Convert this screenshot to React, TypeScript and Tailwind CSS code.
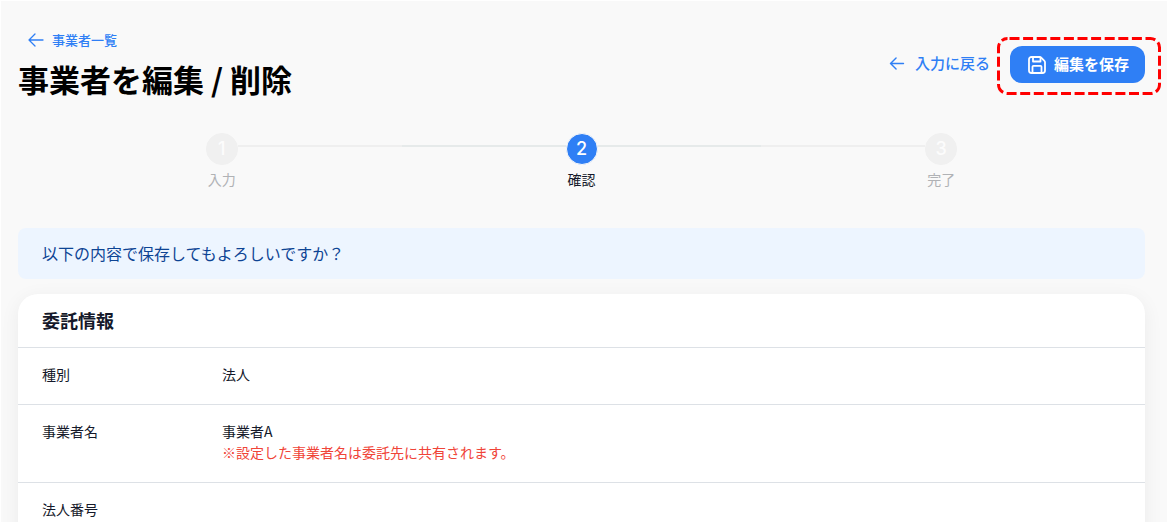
import clsx from "clsx";

const steps = [
  { number: 1, label: "入力" },
  { number: 2, label: "確認" },
  { number: 3, label: "完了" },
];

const rows = [
  { label: "種別", value: "法人" },
  {
    label: "事業者名",
    value: "事業者A",
    note: "※設定した事業者名は委託先に共有されます。",
  },
  { label: "法人番号", value: "" },
];

const CURRENT_STEP = 2;

function ArrowLeftIcon({ className }: { className?: string }) {
  return (
    <svg
      viewBox="0 0 16 14"
      className={className}
      fill="none"
      stroke="currentColor"
      strokeLinecap="round"
      strokeLinejoin="round"
      aria-hidden="true"
    >
      <path d="M7 1 1 7l6 6M1 7h14" />
    </svg>
  );
}

function SaveIcon() {
  return (
    <svg
      viewBox="0 0 18 18"
      className="size-[18px] shrink-0"
      fill="none"
      stroke="currentColor"
      strokeWidth="1.8"
      strokeLinejoin="round"
      aria-hidden="true"
    >
      <path d="M3.5 1h8.3a2 2 0 0 1 1.4.6l3.2 3.2a2 2 0 0 1 .6 1.4v8.3a2.5 2.5 0 0 1-2.5 2.5h-11A2.5 2.5 0 0 1 1 14.5v-11A2.5 2.5 0 0 1 3.500 1z" />
      <path d="M5 1.2v4.300h7.500V1.800M4.500 16.800V10.800a1 1 0 0 1 1-1h7a1 1 0 0 1 1 1v6" />
    </svg>
  );
}

function PageHeader() {
  return (
    <header className="flex justify-between">
      <div>
        <a
          href="#list"
          className="ml-2.5 flex h-5 items-center gap-2 text-[13px] font-medium text-[#2f7ff5]"
        >
          <ArrowLeftIcon className="h-3.5 w-4 stroke-[1.3]" />
          事業者一覧
        </a>
        <h1 className="mt-1.5 text-[31px] leading-[45px] font-bold text-black">
          事業者を編集 / 削除
        </h1>
      </div>

      <div className="flex items-start gap-2 pt-2">
        <a
          href="#input"
          className="flex h-[50px] items-center gap-2.5 text-[15px] font-medium text-[#2f7ff5]"
        >
          <ArrowLeftIcon className="h-[13px] w-4 stroke-[1.5]" />
          入力に戻る
        </a>
        {/* Highlight around the save action */}
        <div className="relative -mr-3.5 pt-2 pr-3.5 pb-2.5 pl-3">
          <svg
            className="absolute inset-0 size-full overflow-visible"
            fill="none"
            aria-hidden="true"
          >
            <rect
              x="0.5"
              y="0.5"
              width="100%"
              height="100%"
              rx="9"
              stroke="#ff0000"
              strokeWidth="3"
              strokeDasharray="10 3.6"
              strokeDashoffset="-2"
            />
          </svg>
          <button
            type="button"
            className="relative flex h-[37px] w-[135px] items-center gap-2 rounded-xl bg-[#2f7ff5] pl-[18px] text-[15px] font-bold whitespace-nowrap text-white"
          >
            <SaveIcon />
            編集を保存
          </button>
        </div>
      </div>
    </header>
  );
}

function Stepper() {
  return (
    <ol className="mx-6 mt-8 grid grid-cols-3">
      {steps.map((step, i) => {
        const active = step.number === CURRENT_STEP;
        return (
          <li
            key={step.number}
            className="flex flex-col items-center"
            aria-current={active ? "step" : undefined}
          >
            <div className="flex h-8 w-full">
              <span
                className={clsx(
                  "mt-3 h-0.5 flex-1",
                  i > 0 && (active ? "bg-[#e6eaea]" : "bg-[#efefef]")
                )}
              />
              <span
                className={clsx(
                  "flex size-8 items-center justify-center rounded-full border font-[Inter] text-lg font-medium",
                  active
                    ? "border-[#f9f9f9] bg-[#2f7ff5] text-white"
                    : "border-[#f0f0f0] bg-[#f0f0f0] text-[#fcfcfc]"
                )}
              >
                {step.number}
              </span>
              <span
                className={clsx(
                  "mt-3 h-0.5 flex-1",
                  i < steps.length - 1 &&
                    (active ? "bg-[#e6eaea]" : "bg-[#efefef]")
                )}
              />
            </div>
            <span
              className={clsx(
                "mt-1 text-sm leading-5",
                active ? "text-[#15192a]" : "text-[#b0b2b5]"
              )}
            >
              {step.label}
            </span>
          </li>
        );
      })}
    </ol>
  );
}

export default function App() {
  return (
    <div className="h-screen overflow-hidden bg-white pt-px pr-[3px] pl-px font-['Noto_Sans_CJK_JP',sans-serif]">
      <main className="min-h-full bg-[#f9f9f9] pt-[29px] pr-[22px] pl-[17px]">
        <PageHeader />
        <Stepper />

        <p className="mt-[39px] rounded-lg bg-[#edf5ff] px-6 py-3 text-base leading-[27px] text-[#0d4494]">
          以下の内容で保存してもよろしいですか？
        </p>

        <section className="mt-[15px] rounded-[20px] bg-white pb-6 shadow-[0_4px_20px_rgba(0,0,0,0.06)]">
          <h2 className="px-6 py-3 text-lg leading-[29px] font-bold text-[#15192a]">
            委託情報
          </h2>
          <dl>
            {rows.map((row) => (
              <div
                key={row.label}
                className="flex border-t border-[#dde1e6] px-6 pt-4 pb-[19px] text-sm leading-[21px] text-[#15192a]"
              >
                <dt className="w-[180px] shrink-0">{row.label}</dt>
                <dd>
                  {row.value}
                  {row.note && <p className="text-[#f04438]">{row.note}</p>}
                </dd>
              </div>
            ))}
          </dl>
        </section>
      </main>
    </div>
  );
}
